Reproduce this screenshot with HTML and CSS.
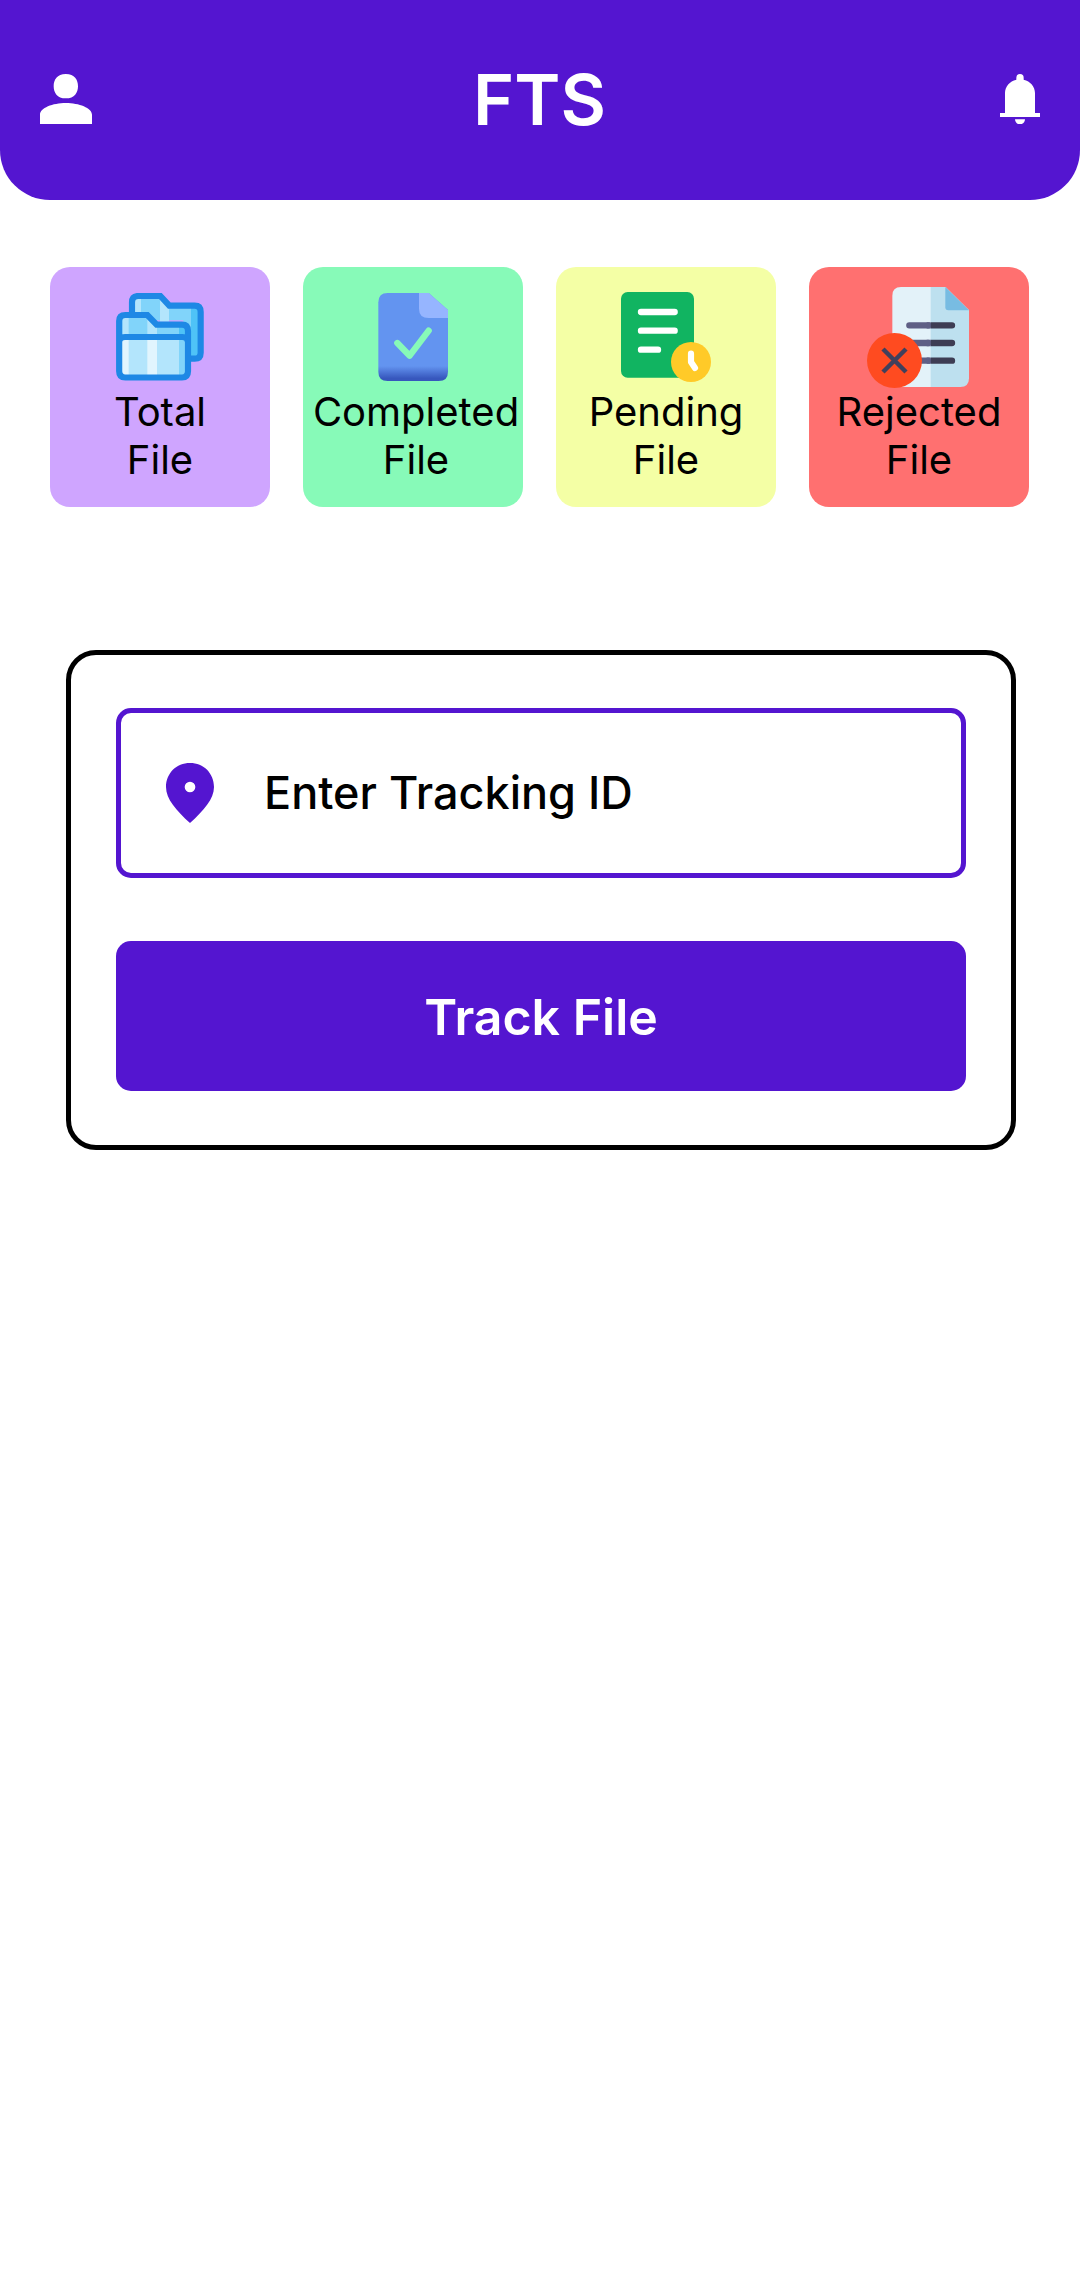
FILE: index.html
```
<!DOCTYPE html>
<html lang="en">
<head>
<meta charset="utf-8">
<title>FTS</title>
<link rel="stylesheet" href="styles.css">
</head>
<body>
<header class="topbar">
  <svg class="icon-user" viewBox="0 0 156 150" aria-label="Profile"><path d="M77.500 0C104 0 114 18 114 36.500S104 73 77.500 73 41 55 41 36.500 51 0 77.500 0zM0 150V122C0 102 38 87 77.500 87S156 102 156 122V150z"/></svg>
  <h1 class="brand">FTS</h1>
  <svg class="icon-bell" viewBox="0 0 120 150" aria-label="Notifications"><path d="M49 17V11a11 11 0 0 1 22 0v6C91 22 105 37 105 57V117H120V129H0V117H15V57C15 37 29 22 49 17zM45 136H75C75 145 68 151 60 151S45 145 45 136z"/></svg>
</header>
<main>
  <section class="stats">
    <article class="card card-total">
      <div class="card-icon">
        <svg width="88" height="88" viewBox="228 114 264 264">
          <path fill="#81d4fa" d="M276 196V138Q276 124 290 124H361L388 152H466Q482 152 482 168V296Q482 311 466 311H430V196z"/>
          <path fill="#b3e5fc" d="M280 128H303V190H280zM360 124L387 152V200H360z"/>
          <path fill="#4fc3f7" d="M453 152H466Q482 152 482 168V296Q482 311 466 311H453z"/>
          <path fill="none" stroke="#1e88e5" stroke-width="18.500" d="M276 186V142Q276 123 295 123H361L388 152H464Q482 152 482 171V293Q482 311 464 311H440"/>
          <path fill="#81d4fa" d="M238 245V200Q238 180 256 180H322L350 209H425Q444 209 444 227V245z"/>
          <path fill="#b3e5fc" d="M247 188H266V245H247zM322 184L351 210V245H322z"/>
          <path fill="#4fc3f7" d="M417 210H444V245H417z"/>
          <path fill="#b3e5fc" d="M238 246H444V367H238z"/>
          <path fill="#e1f5fe" d="M240 248H266V366H240zM322 248H351V366H322z"/>
          <path fill="#81d4fa" d="M417 248H444V366H417z"/>
          <path fill="none" stroke="#1e88e5" stroke-width="18.500" d="M237.500 262V198Q237.500 180 256 180H322L350 209H426Q444 209 444 228V349Q444 367.500 426 367.500H256Q237.500 367.500 237.500 349V262Q237.500 246 255 246H427Q444 246 444 262"/>
        </svg>
      </div>
      <p class="card-label">Total<br>File</p>
    </article>
    <article class="card card-completed">
      <div class="card-icon">
        <svg width="70" height="88" viewBox="249 114 210 264">
          <defs><linearGradient id="fold-shade" x1="0" y1="0" x2="0" y2="1"><stop offset=".83" stop-color="#6394f0"/><stop offset=".97" stop-color="#3757bd"/></linearGradient></defs>
          <path fill="url(#fold-shade)" d="M278 114H401L459 165V350Q459 378 431 378H278Q250 378 250 350V142Q250 114 278 114z"/>
          <path fill="#96b5ff" d="M372 114H401L459 165V189H401Q372 189 372 161z"/>
          <path fill="none" stroke="#87fab8" stroke-width="19" stroke-linecap="round" stroke-linejoin="round" d="M307 264L344 302L401 227"/>
        </svg>
      </div>
      <p class="card-label">Completed<br>File</p>
    </article>
    <article class="card card-pending">
      <div class="card-icon">
        <svg width="90" height="90" viewBox="228 111 270 270">
          <rect x="228" y="111" width="219" height="257" rx="20" fill="#11b461"/>
          <path stroke="#fff" stroke-width="19" stroke-linecap="round" d="M288 171H389M288 227H389M288 284H339"/>
          <circle cx="438" cy="321" r="60" fill="#ffca28"/>
          <path fill="none" stroke="#fff" stroke-width="18.500" stroke-linecap="round" stroke-linejoin="round" d="M438 296V321L450 339"/>
        </svg>
      </div>
      <p class="card-label">Pending<br>File</p>
    </article>
    <article class="card card-rejected">
      <div class="card-icon">
        <svg width="102" height="101" viewBox="201 96 306 303">
          <path fill="#e3f2f9" d="M303 96H393V396H277V122Q277 96 303 96z"/>
          <path fill="#bde0ef" d="M392 96H437L507 165V370Q507 396 481 396H392z"/>
          <path fill="#78bce2" d="M436 96L507 166H445Q436 166 436 157z"/>
          <path stroke="#5f5f85" stroke-width="19" stroke-linecap="round" d="M328 211H385M328 264H385M328 317H385"/>
          <path fill="#3d3d54" d="M392 201.500H456a9.500 9.500 0 0 1 0 19H392zM392 254.500H456a9.500 9.500 0 0 1 0 19H392zM392 307.500H456a9.500 9.500 0 0 1 0 19H392z"/>
          <path fill="#5f5f85" d="M380 201.500H392V220.500H380zM380 254.500H392V273.500H380zM380 307.500H392V326.500H380z"/>
          <circle cx="283.500" cy="316.500" r="82.500" fill="#ff4b20"/>
          <path stroke="#40405c" stroke-width="13.500" d="M249 282L318 351M318 282L249 351"/>
        </svg>
      </div>
      <p class="card-label">Rejected<br>File</p>
    </article>
  </section>
  <section class="tracker">
    <label class="field">
      <svg class="icon-pin" viewBox="0 0 144 180"><path fill-rule="evenodd" d="M72 0C113 0 144 31 144 72C144 108 113 143 72 180C31 143 0 108 0 72C0 31 31 0 72 0zM72 56a16 16 0 1 0 0 32a16 16 0 1 0 0-32z"/></svg>
      <span class="field-text">Enter Tracking ID</span>
    </label>
    <button class="submit" type="button">Track File</button>
  </section>
</main>
</body>
</html>
```
FILE: styles.css
```
* { box-sizing: border-box; }

body {
  margin: 0;
  min-height: 2280px;
  background: #fff;
  color: #000;
  font-family: Inter, "Liberation Sans", sans-serif;
}

svg { display: block; flex: none; }

.topbar {
  display: flex;
  justify-content: space-between;
  align-items: center;
  height: 200px;
  padding: 0 40px 2px;
  border-radius: 0 0 50px 50px;
  background: #5415d0;
  color: #fff;
}
.icon-user { width: 52px; height: 50px; fill: currentColor; }
.icon-bell { width: 40px; height: 50px; fill: currentColor; }
.brand {
  margin: 0;
  padding: 2px 13px 0 0;
  font-size: 70px;
  line-height: 84px;
  font-weight: 600;
}

.stats {
  display: grid;
  grid-template-columns: repeat(4, 220px);
  gap: 33px;
  padding: 67px 0 0 50px;
}
.card {
  height: 240px;
  padding-top: 20px;
  border-radius: 20px;
}
.card-total { background: #cfa5ff; }
.card-completed { background: #87fab8; }
.card-pending { background: #f4ffa5; }
.card-rejected { background: #ff7070; }
.card-icon {
  display: flex;
  justify-content: center;
  align-items: center;
  height: 100px;
}
.card-rejected .card-icon { padding-right: 2px; }
.card-label {
  margin: 1px 0 0;
  font-size: 40px;
  line-height: 48px;
  text-align: center;
}
.card-completed .card-label { padding-left: 6px; }

.tracker {
  width: 950px;
  height: 500px;
  margin: 143px 0 0 66px;
  padding: 53px 45px;
  border: 5px solid #000;
  border-radius: 30px;
}
.field {
  display: flex;
  align-items: center;
  gap: 50px;
  height: 170px;
  padding-left: 45px;
  border: 5px solid #5415d0;
  border-radius: 15px;
}
.icon-pin { width: 48px; height: 60px; fill: #5415d0; }
.field-text { padding-bottom: 2px; font-size: 45px; font-weight: 500; }
.submit {
  display: block;
  width: 100%;
  height: 150px;
  margin-top: 63px;
  padding: 2px 0 0;
  border: 0;
  border-radius: 15px;
  background: #5415d0;
  color: #fff;
  font: 600 50px Inter, "Liberation Sans", sans-serif;
}
```
